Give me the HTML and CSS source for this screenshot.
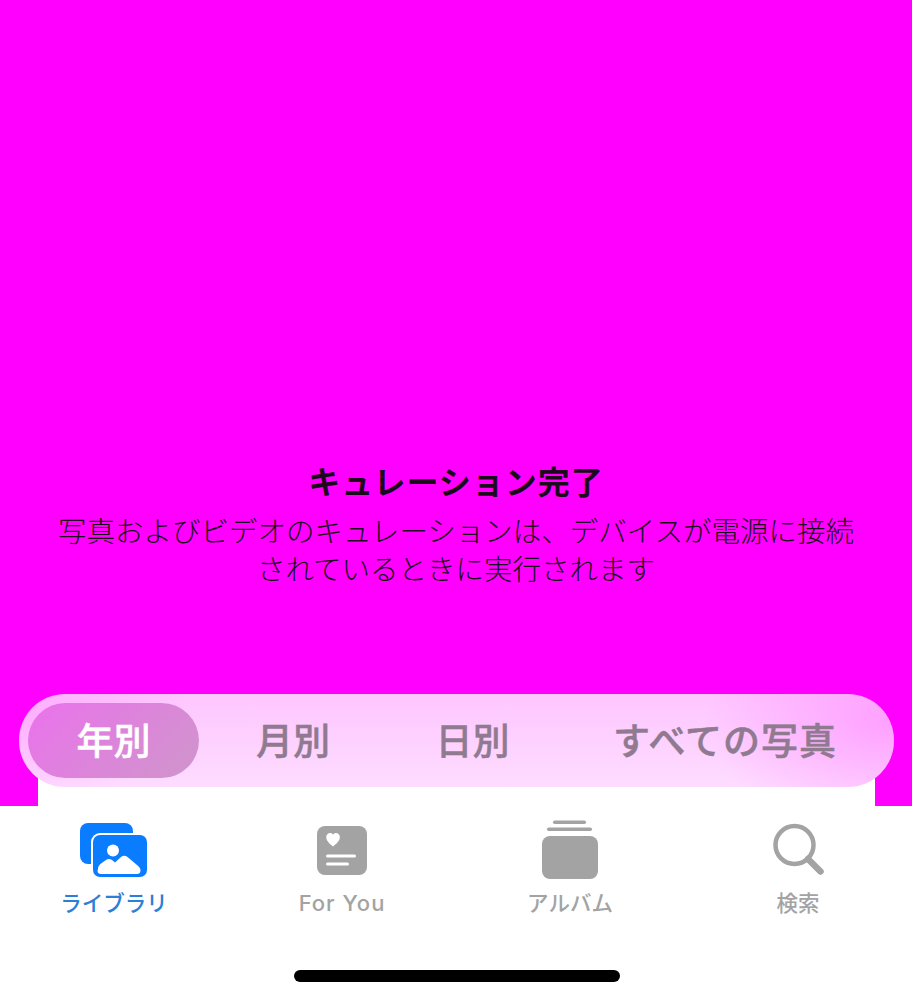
FILE: index.html
```html
<!DOCTYPE html>
<html lang="ja">
<head>
<meta charset="utf-8">
<title>写真</title>
<link rel="stylesheet" href="styles.css">
</head>
<body>
<div class="screen">
  <main class="content">
    <section class="message">
      <h1 class="message-title">キュレーション完了</h1>
      <p class="message-body">写真およびビデオのキュレーションは、デバイスが電源に接続<br>されているときに実行されます</p>
    </section>
    <div class="segments">
      <span class="segment is-active">年別</span>
      <span class="segment">月別</span>
      <span class="segment">日別</span>
      <span class="segment">すべての写真</span>
    </div>
    <div class="sheet-edge"></div>
  </main>
  <nav class="tabbar">
    <a class="tab is-active">
      <svg class="tab-icon" viewBox="0 0 228 62" aria-hidden="true">
        <rect x="80" y="3" width="53" height="41" rx="8" fill="#0a7cff"/>
        <rect x="91" y="13" width="58" height="46" rx="9" fill="#fff"/>
        <rect x="93" y="15" width="54" height="42" rx="7" fill="#0a7cff"/>
        <circle cx="113" cy="30.500" r="6" fill="#fff"/>
        <path d="M98 49c0-2.500 1-4 3-5.500l5-3.500c2-1.300 4-1.300 6 0l3 2.500 6-5.500c2-1.800 4.500-1.800 6.500 0l9.500 8c2 1.700 3.500 3 3.500 5.500 0 2.500-1.500 3.500-3.500 3.500h-36c-2 0-3.500-1-3.500-3z" fill="#fff"/>
      </svg>
      <span class="tab-label">ライブラリ</span>
    </a>
    <a class="tab">
      <svg class="tab-icon" viewBox="228 0 228 62" aria-hidden="true">
        <rect x="317" y="6" width="50" height="49" rx="8" fill="#a3a3a3"/>
        <path d="M333 26.500c-1-.9-6.800-5-6.800-9.300 0-2.500 1.800-4.200 4-4.200 1.200 0 2.200.6 2.800 1.700.6-1.100 1.700-1.700 2.900-1.700 2.200 0 4 1.700 4 4.200 0 4.300-5.900 8.400-6.900 9.300z" fill="#fff"/>
        <rect x="326" y="34.500" width="30" height="3" rx="1.500" fill="#fff"/>
        <rect x="326" y="42.500" width="23" height="3" rx="1.500" fill="#fff"/>
      </svg>
      <span class="tab-label tab-label-latin">For You</span>
    </a>
    <a class="tab">
      <svg class="tab-icon" viewBox="456 0 228 62" aria-hidden="true">
        <rect x="542" y="16" width="56" height="43" rx="8" fill="#a3a3a3"/>
        <rect x="547" y="7.500" width="45" height="3.500" rx="1.700" fill="#a3a3a3"/>
        <rect x="553" y="0.500" width="33" height="3.500" rx="1.700" fill="#a3a3a3"/>
      </svg>
      <span class="tab-label">アルバム</span>
    </a>
    <a class="tab">
      <svg class="tab-icon" viewBox="684 0 228 62" aria-hidden="true">
        <circle cx="794.500" cy="25" r="19" fill="none" stroke="#a3a3a3" stroke-width="4.500"/>
        <path d="M808 39l12.500 12.500" fill="none" stroke="#a3a3a3" stroke-width="6.500" stroke-linecap="round"/>
      </svg>
      <span class="tab-label">検索</span>
    </a>
    <div class="home-indicator"></div>
  </nav>
</div>
</body>
</html>
```
FILE: styles.css
```css
* { box-sizing: border-box; }

html, body {
  margin: 0;
  padding: 0;
  background: #fff;
}

body {
  font-family: "Noto Sans CJK JP", "Noto Sans", sans-serif;
}

.screen {
  width: 912px;
  height: 999px;
  overflow: hidden;
  display: flex;
  flex-direction: column;
}

.content {
  height: 806px;
  background: #ff00ff;
  display: flex;
  flex-direction: column;
  padding-top: 458px;
}

.message {
  text-align: center;
  color: #1c0a1c;
  height: 236px;
}

.message-title {
  margin: 0;
  font-size: 32px;
  line-height: 44px;
  font-weight: 700;
  letter-spacing: 1px;
}

.message-body {
  margin: 9px 0 0;
  font-size: 28.500px;
  line-height: 38px;
  font-weight: 300;
}

.segments {
  position: relative;
  z-index: 1;
  margin: 0 18px 0 19px;
  height: 93px;
  flex: none;
  display: flex;
  align-items: center;
  gap: 8.500px;
  padding: 0 9px;
  border-radius: 46px;
  background:
    radial-gradient(ellipse 190px 110px at 100% 30%, rgba(255, 130, 255, .6) 0, rgba(255, 130, 255, 0) 100%),
    radial-gradient(ellipse 170px 90px at 0 20%, rgba(255, 140, 255, .45) 0, rgba(255, 140, 255, 0) 100%),
    linear-gradient(180deg, #fec6ff 0, #fddcff 100%);
}

.segment {
  height: 75px;
  padding: 0 48.500px 3px;
  border-radius: 38px;
  display: flex;
  align-items: center;
  font-size: 37px;
  font-weight: 500;
  -webkit-text-stroke: .5px currentColor;
  white-space: nowrap;
  color: #8f7a90;
}

.segment:last-child {
  padding: 0 42px 3px 46.500px;
  letter-spacing: 1px;
}

.segment.is-active {
  color: #fff;
  background: linear-gradient(135deg, #ea72ec 0, #cf96ca 100%);
}

.sheet-edge {
  height: 39px;
  margin: -20px 37px 0 38px;
  background: #fff;
  flex: none;
}

.tabbar {
  position: relative;
  flex: 1;
  display: flex;
  align-items: flex-start;
  padding-top: 14px;
  background: #fff;
}

.tab {
  width: 228px;
  display: flex;
  flex-direction: column;
  align-items: center;
}

.tab-icon {
  display: block;
  width: 228px;
  height: 62px;
}

.tab-label {
  margin-top: 4px;
  font-size: 21.500px;
  line-height: 32px;
  font-weight: 500;
  color: #a3a3a3;
}

.tab-label-latin {
  margin-top: 5px;
  font-family: Inter, "Noto Sans", sans-serif;
  font-size: 22px;
  font-weight: 500;
  letter-spacing: 1px;
}

.tab.is-active .tab-label {
  color: #2b7fd8;
}

.home-indicator {
  position: absolute;
  left: 294px;
  top: 164px;
  width: 326px;
  height: 12px;
  border-radius: 6px;
  background: #000;
}
```
